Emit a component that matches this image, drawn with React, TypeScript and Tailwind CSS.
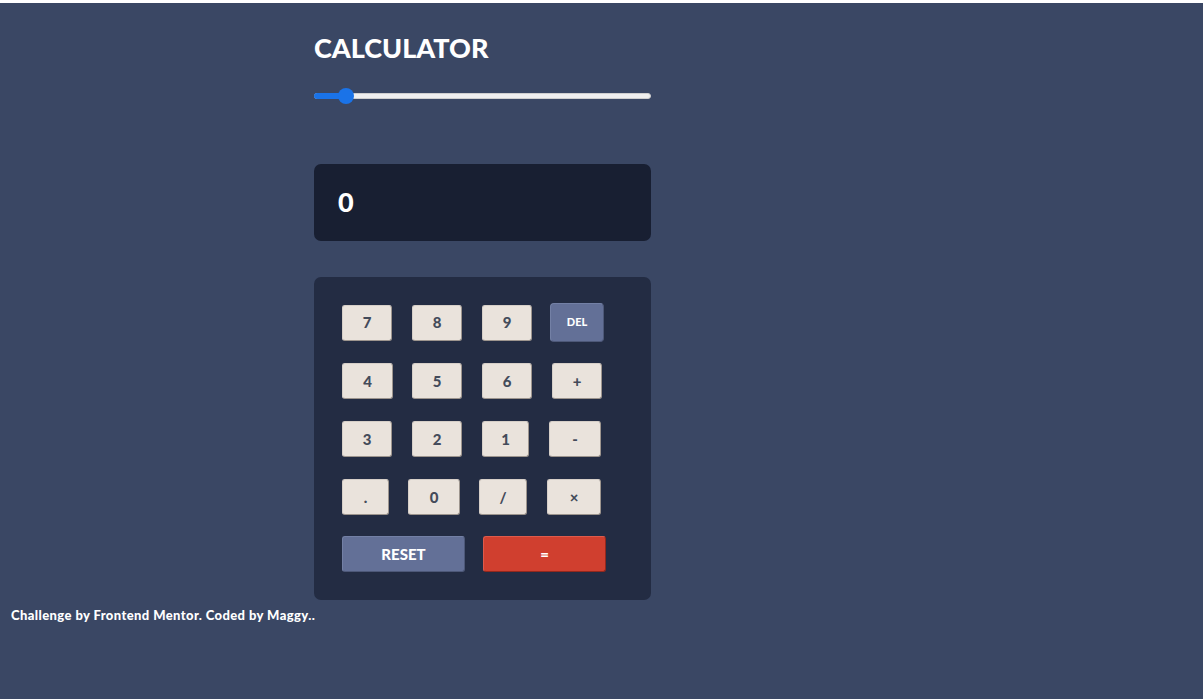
const keyRows = [
  [
    { label: "4", w: "w-[51px]", ml: "" },
    { label: "5", w: "w-[50px]", ml: "ml-[19px]" },
    { label: "6", w: "w-[50px]", ml: "ml-[20px]" },
    { label: "+", w: "w-[50px]", ml: "ml-[20px]" },
  ],
  [
    { label: "3", w: "w-[50px]", ml: "" },
    { label: "2", w: "w-[50px]", ml: "ml-[20px]" },
    { label: "1", w: "w-[47px]", ml: "ml-[20px]" },
    { label: "-", w: "w-[52px]", ml: "ml-[20px]" },
  ],
  [
    { label: ".", w: "w-[47px]", ml: "" },
    { label: "0", w: "w-[52px]", ml: "ml-[19px]" },
    { label: "/", w: "w-[48px]", ml: "ml-[19px]" },
    { label: "×", w: "w-[54px]", ml: "ml-[20px]" },
  ],
];

function Key({ label, w, ml = "" }: { label: string; w: string; ml?: string }) {
  return (
    <button
      className={`${w} ${ml} h-[36px] rounded-[3px] bg-[#eae3dc] text-[#444b5a] text-[15px] font-black border border-[#9d958e] border-t-[#d6cfc8] border-l-[#d6cfc8]`}
    >
      {label}
    </button>
  );
}

export default function App() {
  return (
    <div
      className="min-h-[699px] bg-[#3a4764] text-white"
      style={{ fontFamily: "Lato, 'Open Sans', sans-serif" }}
    >
      <div className="h-[3px] bg-white" />

      <div className="pl-[314px] pt-[29px]">
        <div className="w-[337px]">
          <h1 className="text-[27px] leading-[32px] font-black">CALCULATOR</h1>

          {/* theme slider */}
          <div className="relative mt-[24px] h-[16px] flex items-center">
            <div className="w-full h-[6px] rounded-full bg-[#efefef] border border-[#cfcfcf]" />
            <div className="absolute left-0 top-[5px] w-[32px] h-[6px] rounded-full bg-[#1a73e8]" />
            <div className="absolute left-[24px] top-0 w-[16px] h-[16px] rounded-full bg-[#1a73e8]" />
          </div>

          <div className="mt-[60px] h-[77px] rounded-[7px] bg-[#181f32] flex items-center px-[24px]">
            <span className="text-[27px] font-black">0</span>
          </div>

          <div className="mt-[36px] h-[323px] rounded-[7px] bg-[#232c43] pl-[28px] pt-[26px]">
            <div className="flex items-center gap-[20px] h-[39px]">
              <Key label="7" w="w-[50px]" />
              <Key label="8" w="w-[50px]" />
              <Key label="9" w="w-[50px]" />
              <button className="-ml-[2px] w-[54px] h-[39px] rounded-[4px] bg-[#637097] text-white text-[11px] font-black border border-[#4d5878] border-t-[#7380a5] border-l-[#7380a5]">
                DEL
              </button>
            </div>
            <div className="mt-[21px] flex flex-col gap-[22px]">
              {keyRows.map((row, i) => (
                <div key={i} className="flex items-center">
                  {row.map((k) => (
                    <Key key={k.label} {...k} />
                  ))}
                </div>
              ))}
              <div className="flex items-center gap-[18px] -mt-[1px]">
                <button className="w-[123px] h-[36px] rounded-[3px] bg-[#637097] text-white text-[15px] font-black border border-[#4d5878] border-t-[#7380a5] border-l-[#7380a5]">
                  RESET
                </button>
                <button className="w-[123px] h-[36px] rounded-[3px] bg-[#d03f2f] text-white text-[15px] font-black border border-[#93281d] border-t-[#de5a4b] border-l-[#de5a4b]">
                  =
                </button>
              </div>
            </div>
          </div>
        </div>
      </div>

      <p className="pl-[11px] pt-[6px] text-[13px] tracking-[0.4px] font-black">
        Challenge by Frontend Mentor. Coded by Maggy..
      </p>
    </div>
  );
}
